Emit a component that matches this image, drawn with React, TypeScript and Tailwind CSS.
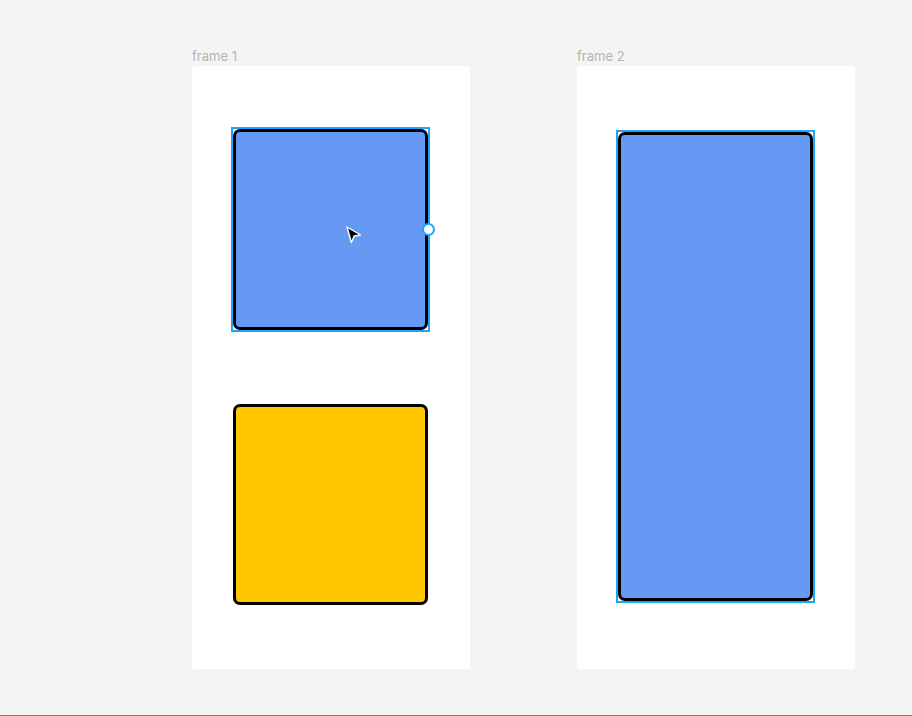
import React from "react";

function Cursor() {
  return (
    <svg width="18" height="20" viewBox="0 0 18 20" className="absolute left-[112px] top-[96px]">
      <path d="M2 2 L15.5 10 L9.2 11 L6.4 17.5 Z" fill="#000" stroke="#fff" strokeWidth="1.4" strokeLinejoin="round" />
    </svg>
  );
}

export default function App() {
  return (
    <div className="h-[716px] w-[912px] bg-[#f4f4f4] border-b border-[#7f7f7f] overflow-hidden" style={{ fontFamily: "Inter, 'Noto Sans', sans-serif" }}>
      <div className="flex gap-[107px] pl-[192px] pt-[46px]">
        <div className="flex flex-col">
          <div className="text-[13px] leading-[20px] text-[#b3b3b3]">frame 1</div>
          <div className="w-[278px] h-[603px] bg-white rounded-[2px] flex flex-col pl-[39px] pt-[61px]">
            <div className="relative w-[199px] h-[205px] border-2 border-[#1ea5fb]">
              <div className="w-full h-full border-[3px] border-black rounded-[7px] bg-[#6699f4]" />
              <Cursor />
              <div className="absolute right-[-7px] top-[94px] w-[13px] h-[13px] rounded-full bg-white border-2 border-[#1ea5fb]" />
            </div>
            <div className="ml-[2px] mt-[72px] w-[195px] h-[201px] border-[3px] border-black rounded-[7px] bg-[#ffc700]" />
          </div>
        </div>
        <div className="flex flex-col">
          <div className="text-[13px] leading-[20px] text-[#b3b3b3]">frame 2</div>
          <div className="w-[278px] h-[603px] bg-white rounded-[2px] pl-[39px] pt-[64px]">
            <div className="w-[199px] h-[473px] border-2 border-[#1ea5fb]">
              <div className="w-full h-full border-[3px] border-black rounded-[7px] bg-[#6699f4]" />
            </div>
          </div>
        </div>
      </div>
    </div>
  );
}
